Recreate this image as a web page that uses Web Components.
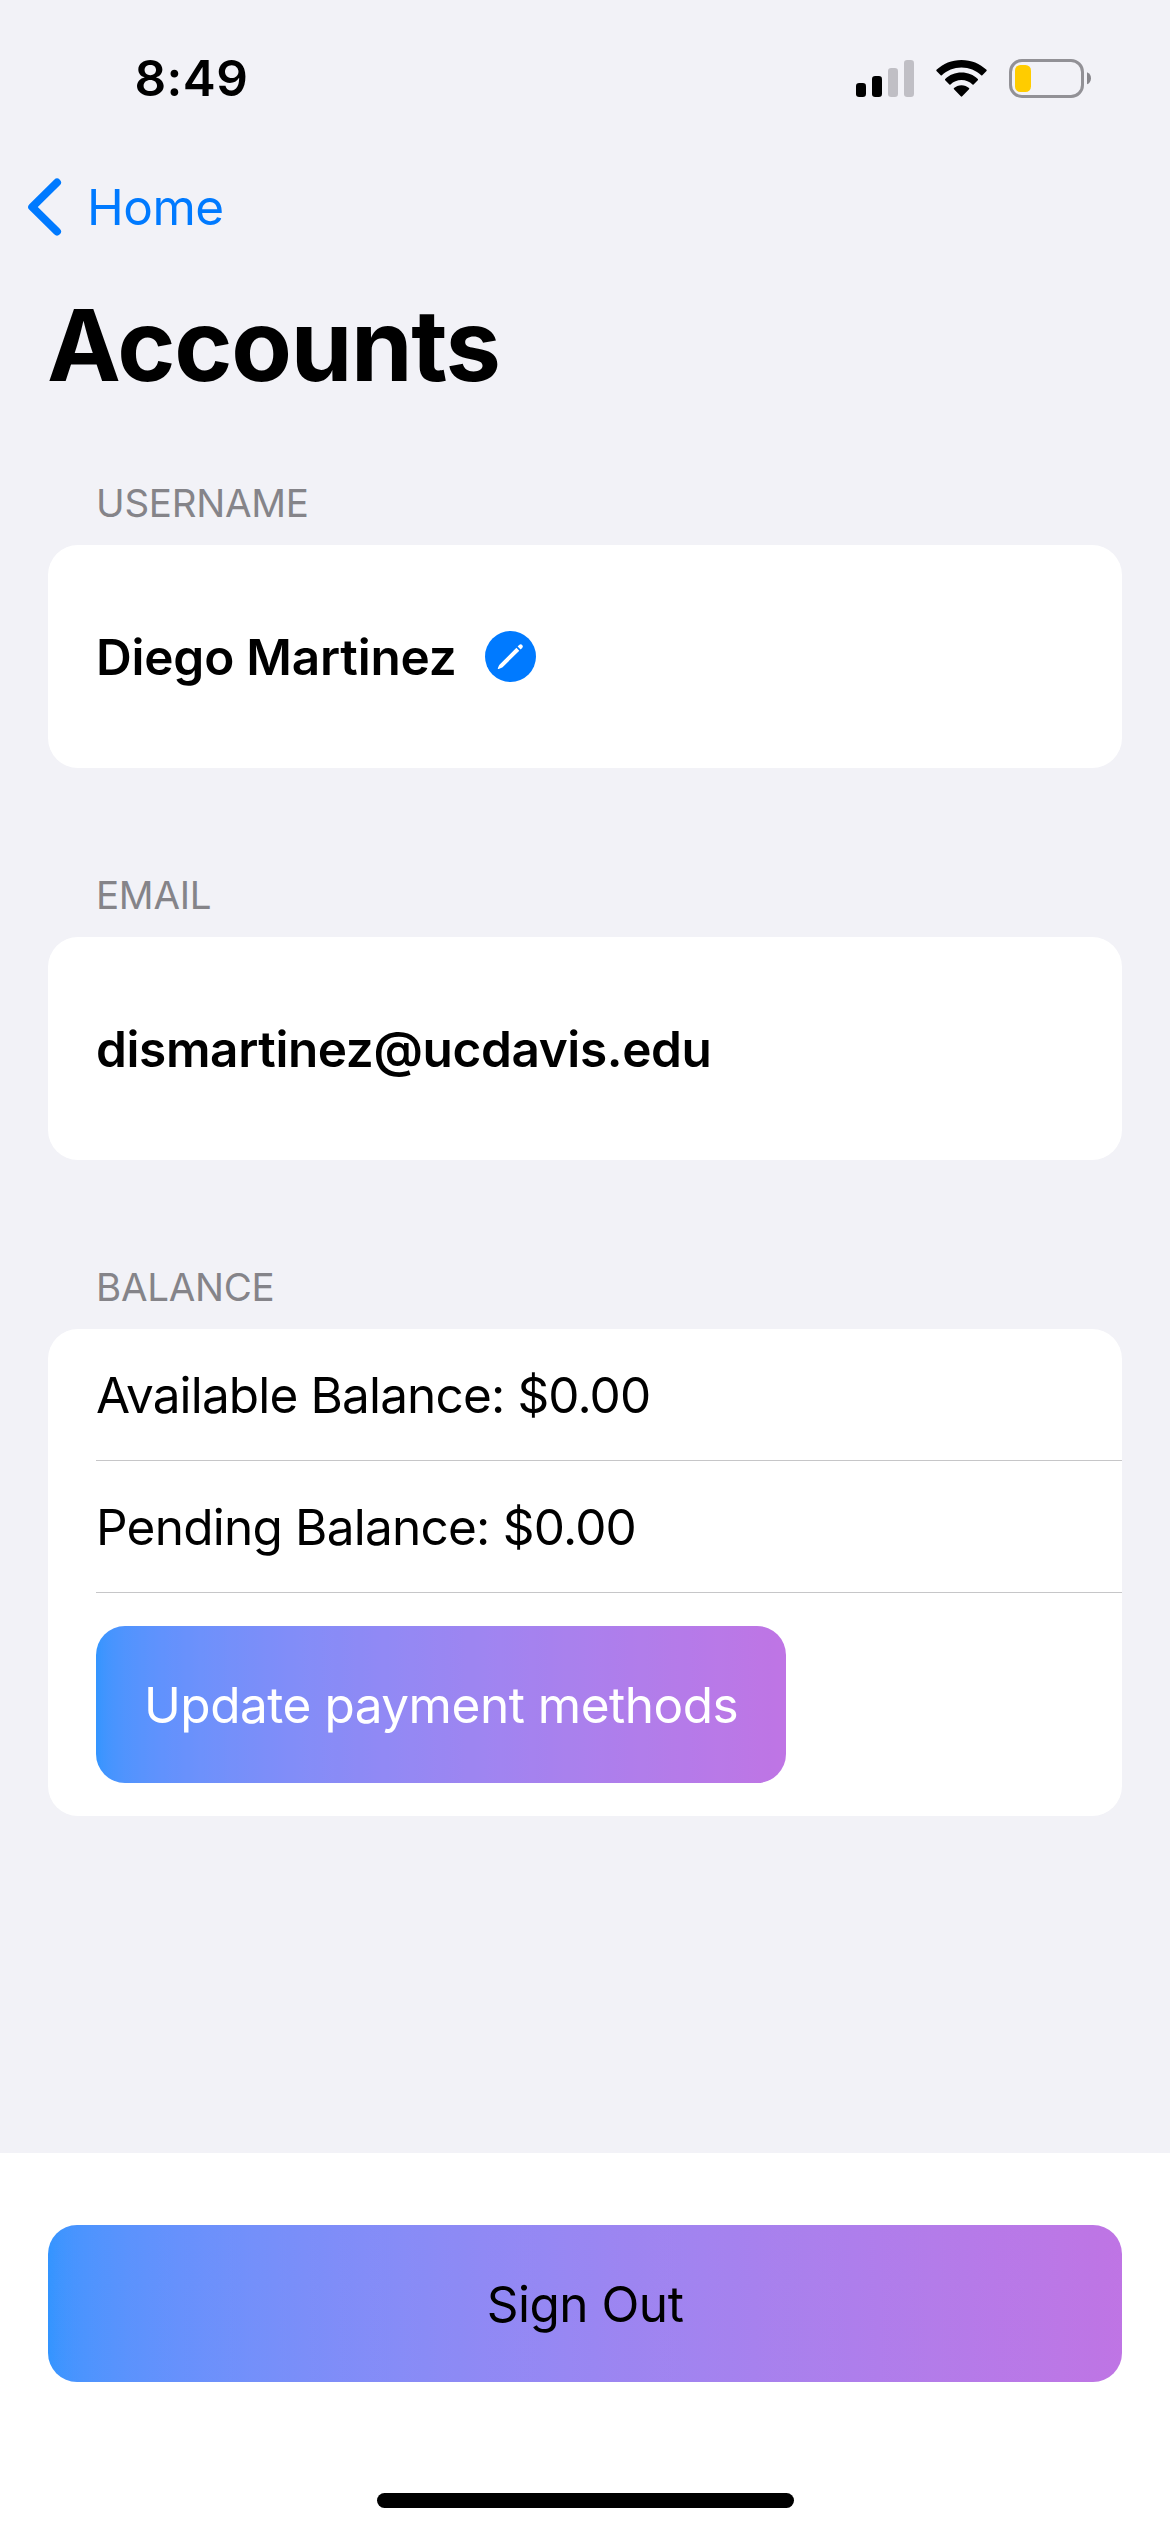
<!DOCTYPE html>
<html lang="en">
<head>
<meta charset="utf-8">
<title>Accounts</title>
<style>
  body { margin: 0; background: #f2f2f7; font-family: Inter, "Liberation Sans", sans-serif; color: #000; }
</style>
</head>
<body>
<accounts-screen></accounts-screen>

<script>
const define = (name, html) => {
  const template = document.createElement('template');
  template.innerHTML = html;
  customElements.define(name, class extends HTMLElement {
    constructor() {
      super();
      this.attachShadow({ mode: 'open' }).append(template.content.cloneNode(true));
    }
  });
};

define('signal-icon', `
  <style>:host { display: block; width: 58px; height: 37px; } svg { display: block; }</style>
  <svg width="58" height="37" viewBox="0 0 58 37">
    <rect x="0" y="23" width="10" height="14" rx="3.2"/>
    <rect x="16" y="16" width="10" height="21" rx="3.2"/>
    <rect x="32" y="8" width="10" height="29" rx="3.2" fill="#c0bfc5"/>
    <rect x="48" y="0" width="10" height="37" rx="3.2" fill="#c0bfc5"/>
  </svg>`);

define('wifi-icon', `
  <style>:host { display: block; width: 51px; height: 37px; } svg { display: block; }</style>
  <svg width="51" height="37" viewBox="0 0 51 37">
    <path d="M25.5 0C35.2 0 44 3.7 50.5 9.8Q51 10.4 50.5 11L46.3 15.2Q45.8 15.7 45.2 15.2C40 10.4 33.1 7.5 25.5 7.5S11 10.4 5.8 15.2Q5.2 15.7 4.7 15.2L.5 11Q0 10.4 .5 9.8C7 3.7 15.8 0 25.5 0Z"/>
    <path d="M25.5 12.6C31.8 12.6 37.5 15 41.8 19Q42.4 19.6 41.8 20.2L37.6 24.4Q37.1 24.9 36.5 24.4C33.6 21.7 29.7 20.1 25.5 20.1S17.4 21.7 14.5 24.4Q13.9 24.9 13.4 24.4L9.2 20.2Q8.6 19.6 9.2 19C13.5 15 19.2 12.6 25.5 12.6Z"/>
    <path d="M25.5 25.3C28.4 25.3 31 26.4 33 28.1Q33.6 28.7 33 29.3L26.2 36.3Q25.5 37 24.8 36.3L18 29.3Q17.4 28.7 18 28.1C20 26.4 22.6 25.3 25.5 25.3Z"/>
  </svg>`);

define('battery-icon', `
  <style>:host { display: block; width: 82px; height: 39px; } svg { display: block; }</style>
  <svg width="82" height="39" viewBox="0 0 82 39">
    <rect x="1.5" y="1.5" width="72" height="36" rx="11.5" fill="none" stroke="#929196" stroke-width="3"/>
    <rect x="6" y="6" width="16" height="27" rx="5.5" fill="#ffcc00"/>
    <path d="M78 13.2C80.5 14 82 16.5 82 19.2S80.5 24.5 78 25.3Z" fill="#87868b"/>
  </svg>`);

define('pencil-badge', `
  <style>:host { display: block; width: 51px; height: 51px; } svg { display: block; }</style>
  <svg width="51" height="51" viewBox="0 0 51 51">
    <circle cx="25.5" cy="25.5" r="25.5" fill="#007aff"/>
    <path d="M31.4 16.8L34.3 19.7L17.6 36.2Q17.2 36.6 16.6 36.8L13.7 38Q12.5 38.3 12.8 37.2L14.1 34.3Q14.3 33.8 14.7 33.4Z" fill="#fff"/>
    <path d="M32.6 15.6L34.1 14.1Q35.6 12.6 37.2 13.9Q38.6 15.4 37.2 17L35.6 18.5Z" fill="#fff"/>
  </svg>`);

define('status-bar', `
  <style>
    :host { display: flex; box-sizing: border-box; height: 141px; padding: 48px 79px 0 134.5px; align-items: flex-start; }
    time { flex: 1; font-size: 49.5px; line-height: 60px; font-weight: 600; letter-spacing: .4px; }
    .icons { display: flex; align-items: center; height: 60px; }
    signal-icon { margin-right: 22px; }
    wifi-icon { margin-right: 22px; }
  </style>
  <time>8:49</time>
  <div class="icons"><signal-icon></signal-icon><wifi-icon></wifi-icon><battery-icon></battery-icon></div>`);

define('back-link', `
  <style>
    :host { display: flex; height: 132px; padding-left: 27px; align-items: center; gap: 25px; color: #007aff;
            font-size: 49.5px; line-height: 60px; letter-spacing: -.5px; }
    svg { display: block; }
  </style>
  <svg width="35" height="58" viewBox="0 0 35 58" fill="none" stroke="currentColor" stroke-width="8" stroke-linecap="round" stroke-linejoin="round">
    <path d="M30 4.5L5.2 29L30 53.5"/>
  </svg>
  <span><slot></slot></span>`);

define('page-title', `
  <style>
    :host { display: block; }
    h1 { margin: 0; padding: 12px 0 0 47px; font-size: 99px; line-height: 120px; font-weight: 700; letter-spacing: -1.3px; }
  </style>
  <h1><slot></slot></h1>`);

define('list-section', `
  <style>
    :host { display: block; padding: 0 48px; }
    h2 { margin: 0; padding: 0 0 18px 48px; font-size: 38.5px; line-height: 48px; font-weight: 400; color: #858489; letter-spacing: -.27px; }
    .card { background: #fff; border-radius: 30px; overflow: hidden; }
  </style>
  <h2><slot name="header"></slot></h2>
  <div class="card"><slot></slot></div>`);

define('list-row', `
  <style>
    :host { display: flex; box-sizing: border-box; height: 132px; margin-left: 48px; align-items: center; gap: 28.5px;
            font-size: 49.5px; line-height: 60px; border-bottom: 1px solid #c6c6c8; letter-spacing: -.85px; }
    :host([tall]) { height: 223px; border-bottom: 0; font-weight: 600; letter-spacing: -.2px; }
  </style>
  <slot></slot>`);

define('gradient-button', `
  <style>
    :host { display: flex; }
    button { flex: 1; height: 157px; margin: 0; padding: 0 48px; border: 0; border-radius: 29px;
             font: 400 49.5px/60px Inter, "Liberation Sans", sans-serif; letter-spacing: -.48px; color: inherit; white-space: nowrap;
             background: linear-gradient(#fff3, #fff3), linear-gradient(to right in srgb-linear, #007aff, #af52de); }
  </style>
  <button type="button"><slot></slot></button>`);

define('bottom-bar', `
  <style>
    :host { display: flex; box-sizing: border-box; flex-direction: column; height: 379px; padding: 72px 48px 24px; background: #fff;
            justify-content: space-between; }
    .home { align-self: center; width: 417px; height: 15px; border-radius: 7.5px; background: #000; }
  </style>
  <slot></slot>
  <div class="home"></div>`);

define('accounts-screen', `
  <style>
    :host { display: flex; flex-direction: column; width: 1170px; height: 2532px; background: #f2f2f7; }
    main { flex: 1; display: flex; flex-direction: column; gap: 103px; padding-top: 74px; }
    .update { width: 690px; color: #fff; }
    .email { letter-spacing: -.38px; }
    .pending { letter-spacing: -.77px; }
  </style>
  <status-bar></status-bar>
  <back-link>Home</back-link>
  <page-title>Accounts</page-title>
  <main>
    <list-section>
      <span slot="header">USERNAME</span>
      <list-row tall><span>Diego Martinez</span><pencil-badge></pencil-badge></list-row>
    </list-section>
    <list-section>
      <span slot="header">EMAIL</span>
      <list-row tall><span class="email">dismartinez@ucdavis.edu</span></list-row>
    </list-section>
    <list-section>
      <span slot="header">BALANCE</span>
      <list-row><span>Available Balance: $0.00</span></list-row>
      <list-row><span class="pending">Pending Balance: $0.00</span></list-row>
      <list-row tall><gradient-button class="update">Update payment methods</gradient-button></list-row>
    </list-section>
  </main>
  <bottom-bar><gradient-button>Sign Out</gradient-button></bottom-bar>`);
</script>
</body>
</html>
